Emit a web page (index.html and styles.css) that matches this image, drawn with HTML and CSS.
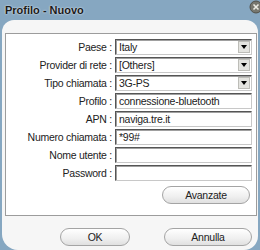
FILE: index.html
```html
<!DOCTYPE html>
<html lang="it">
<head>
    <meta charset="UTF-8">
    <title>Profilo - Nuovo</title>
    <link rel="stylesheet" href="styles.css">
</head>
<body>
    <div class="window">
        <div class="titlebar">
            <span class="title">Profilo - Nuovo</span>
            <svg class="close" width="14" height="14" viewBox="0 0 14 14">
                <circle cx="7" cy="7" r="6" fill="#77776f" stroke="#505049" stroke-width="1"/>
                <path d="M4.5 4.5 L9.5 9.5 M9.5 4.5 L4.5 9.5" stroke="#ecece4" stroke-width="1.6"/>
            </svg>
        </div>

        <div class="panel">
            <div class="box">
                <div class="row">
                    <label>Paese :</label>
                    <div class="combo"><span>Italy</span><i class="arrow"></i></div>
                </div>
                <div class="row">
                    <label>Provider di rete :</label>
                    <div class="combo"><span>[Others]</span><i class="arrow"></i></div>
                </div>
                <div class="row">
                    <label>Tipo chiamata :</label>
                    <div class="combo"><span>3G-PS</span><i class="arrow"></i></div>
                </div>
                <div class="row">
                    <label>Profilo :</label>
                    <div class="field">connessione-bluetooth</div>
                </div>
                <div class="row">
                    <label>APN :</label>
                    <div class="field">naviga.tre.it</div>
                </div>
                <div class="row">
                    <label>Numero chiamata :</label>
                    <div class="field">*99#</div>
                </div>
                <div class="row">
                    <label>Nome utente :</label>
                    <div class="field"></div>
                </div>
                <div class="row">
                    <label>Password :</label>
                    <div class="field"></div>
                </div>

                <div class="extra">
                    <button class="pill wide">Avanzate</button>
                </div>
            </div>

            <div class="footer">
                <button class="pill ok">OK</button>
                <button class="pill wide">Annulla</button>
            </div>
        </div>
    </div>
</body>
</html>
```
FILE: styles.css
```css
body {
    margin: 0;
    font-family: "Liberation Sans", Arial, sans-serif;
    font-size: 10.5px;
    letter-spacing: -0.25px;
    color: #222;
}

.window {
    width: 260px;
    height: 250px;
    background-color: #86a7c1;
    overflow: hidden;
}

.titlebar {
    height: 20px;
    display: flex;
    align-items: center;
    justify-content: space-between;
    padding-left: 5px;
}

.title {
    font-weight: bold;
    font-size: 11px;
    letter-spacing: 0;
    color: #1a1a1a;
    text-shadow: 0 0 2px #fff;
}

.close {
    margin-top: -6px;
    margin-right: -3px;
}

.panel {
    margin-left: 2px;
    width: 256px;
    height: 230px;
    background-color: #f6f6f6;
    border-radius: 12px 12px 14px 16px;
    padding-top: 13px;
    box-sizing: border-box;
}

.box {
    margin-left: 3px;
    width: 252px;
    height: 183px;
    box-sizing: border-box;
    border: 1px solid #9c9c9c;
    background-color: #fff;
    padding-top: 5px;
}

.row {
    display: flex;
    align-items: center;
    height: 16px;
    margin-bottom: 2px;
}

.row label {
    width: 106px;
    text-align: right;
    padding-right: 3px;
    white-space: nowrap;
}

.combo, .field {
    width: 137px;
    height: 16px;
    box-sizing: border-box;
    border-top: 1px solid #555;
    border-left: 1px solid #555;
    border-bottom: 1px solid #c8c8c8;
    border-right: 1px solid #c8c8c8;
    box-shadow: inset 1px 1px 0 #a0a0a0;
    background-color: #fff;
    padding-left: 3px;
    line-height: 14px;
    white-space: nowrap;
    overflow: hidden;
}

.combo {
    display: flex;
    justify-content: space-between;
    padding-right: 1px;
}

.arrow {
    width: 12px;
    height: 12px;
    margin-top: 1px;
    background-color: #e4e4e0;
    border: 1px solid #bdbdb8;
    box-sizing: border-box;
    position: relative;
}

.arrow::after {
    content: "";
    position: absolute;
    left: 2px;
    top: 3px;
    border-left: 3px solid transparent;
    border-right: 3px solid transparent;
    border-top: 4px solid #000;
}

.extra {
    display: flex;
    justify-content: flex-end;
    padding-right: 6px;
    margin-top: 5px;
}

.pill {
    font-family: "Liberation Sans", Arial, sans-serif;
    font-size: 10.5px;
    letter-spacing: -0.25px;
    color: #222;
    height: 18px;
    border: 1px solid #a4a4a4;
    border-radius: 9px;
    background: linear-gradient(#ffffff, #efefef 60%, #e0e0e0);
    padding: 0;
}

.wide {
    width: 88px;
}

.ok {
    width: 70px;
}

.footer {
    display: flex;
    justify-content: flex-end;
    gap: 34px;
    padding-right: 6px;
    margin-top: 12px;
}
```
